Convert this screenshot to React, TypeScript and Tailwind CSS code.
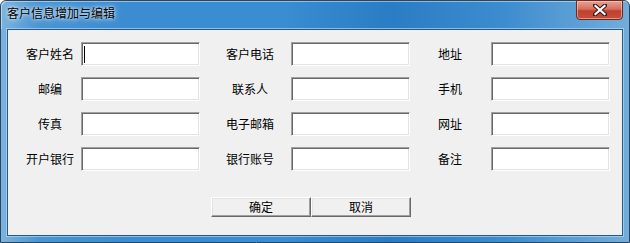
import React from "react";

const font = { fontFamily: '"SimSun","Noto Sans CJK SC",sans-serif' };

const rows: [string, string, string][] = [
  ["客户姓名", "客户电话", "地址"],
  ["邮编", "联系人", "手机"],
  ["传真", "电子邮箱", "网址"],
  ["开户银行", "银行账号", "备注"],
];

function Field({ caret }: { caret?: boolean }) {
  return (
    <div className="w-[119px] h-[24px] bg-white border-t border-l border-t-[#a0a0a0] border-l-[#a0a0a0] border-b border-r border-b-white border-r-white shadow-[inset_1px_1px_0_#696969,inset_-1px_-1px_0_#e3e3e3] flex items-center pl-[2px]">
      {caret && <div className="w-[1px] h-[17px] bg-black" />}
    </div>
  );
}

function Label({ text }: { text: string }) {
  return (
    <div className="w-[60px] h-[24px] flex items-center justify-center text-[12px] text-black leading-none">
      {text}
    </div>
  );
}

function Btn({ text }: { text: string }) {
  return (
    <div className="w-[100px] h-[20px] bg-[#f0f0f0] border-t border-l border-t-white border-l-white border-b border-r border-b-[#696969] border-r-[#696969] shadow-[inset_-1px_-1px_0_#a0a0a0,inset_1px_1px_0_#e3e3e3] flex items-center justify-center text-[12px] text-black leading-none">
      {text}
    </div>
  );
}

export default function App() {
  return (
    <div
      style={font}
      className="w-[630px] h-[243px] rounded-t-[6px] border border-[#2a4560] flex flex-col bg-[linear-gradient(90deg,#7cb3dd_0%,#4a95d3_6%,#3b8cd0_20%,#3a8dd1_45%,#2a7cc4_62%,#3d8ccf_80%,#72addb_100%)]"
    >
      <div className="h-[28px] flex items-start justify-between pl-[6px] pr-[6px] shadow-[inset_1px_1px_0_rgba(255,255,255,0.45)] rounded-t-[5px]">
        <div className="mt-[6px] text-[12px] leading-none text-black [text-shadow:0_0_6px_rgba(255,255,255,0.9),0_0_3px_rgba(255,255,255,0.8)]">
          客户信息增加与编辑
        </div>
        <div className="w-[47px] h-[20px] -mt-[1px] rounded-b-[4px] border border-[#6b2a20] bg-[linear-gradient(180deg,#e6a294_0%,#d4705e_45%,#c0402c_55%,#c84e3a_100%)] shadow-[inset_0_0_0_1px_rgba(255,220,210,0.5)] flex items-center justify-center">
          <svg width="14" height="12" viewBox="0 0 14 12">
            <path
              d="M2 1.5 L12 10.5 M12 1.5 L2 10.5"
              stroke="#3a1a14"
              strokeWidth="4.2"
              strokeLinecap="square"
            />
            <path
              d="M2.5 2 L11.5 10 M11.5 2 L2.5 10"
              stroke="#ffffff"
              strokeWidth="2.2"
              strokeLinecap="square"
            />
          </svg>
        </div>
      </div>
      <div className="mx-[6px] mb-[6px] flex-1 border border-[#2b5680] shadow-[0_0_0_1px_rgba(190,225,250,0.6)] bg-[#f0f0f0] flex flex-col">
        <div className="pl-[12px] pt-[12px] grid grid-cols-[61px_139px_71px_129px_71px_119px] gap-y-[11px]">
          {rows.map((r, i) => (
            <React.Fragment key={i}>
              <Label text={r[0]} />
              <Field caret={i === 0} />
              <Label text={r[1]} />
              <Field />
              <Label text={r[2]} />
              <Field />
            </React.Fragment>
          ))}
        </div>
        <div className="mt-[26px] pl-[203px] flex">
          <Btn text="确定" />
          <Btn text="取消" />
        </div>
      </div>
    </div>
  );
}
